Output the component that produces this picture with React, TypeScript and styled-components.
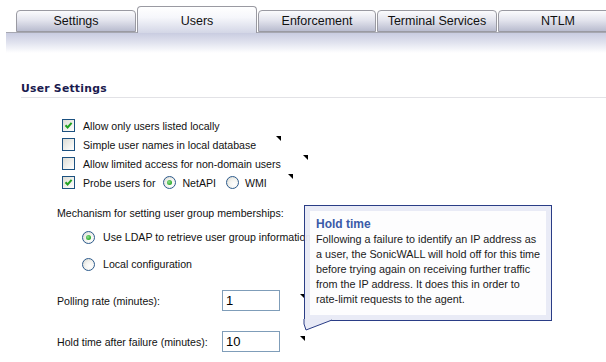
import React from "react";
import styled, { createGlobalStyle } from "styled-components";

const Global = createGlobalStyle`
  html, body { margin: 0; padding: 0; background: #ffffff; }
  body { font-family: "Liberation Sans", Arial, sans-serif; color: #111; width: 606px; height: 362px; overflow: hidden; }
`;

const Page = styled.div`
  position: relative;
  width: 606px;
  height: 362px;
`;

const TabBar = styled.div`
  display: flex;
  align-items: flex-end;
  gap: 1px;
  height: 32px;
  padding-left: 16px;
  position: relative;
  z-index: 2;
`;

const Tab = styled.div<{ $active?: boolean; $w: number }>`
  flex: 0 0 ${(p) => p.$w}px;
  box-sizing: border-box;
  height: ${(p) => (p.$active ? 27 : 22)}px;
  margin-bottom: ${(p) => (p.$active ? -1 : 0)}px;
  border: 1px solid #9a9aa2;
  border-bottom: ${(p) => (p.$active ? "none" : "1px solid #9a9aa2")};
  border-radius: 4px 4px 0 0;
  background: ${(p) =>
    p.$active
      ? "linear-gradient(#ffffff 0%, #f6f7fb 40%, #d3d6e6 100%)"
      : "linear-gradient(#fbfbfd 0%, #e4e5ee 45%, #b9bccf 100%)"};
  display: flex;
  justify-content: center;
  padding-top: ${(p) => (p.$active ? 7 : 3)}px;
  font-size: 12.5px;
  color: #111;
  white-space: nowrap;
`;

const Band = styled.div`
  margin-left: 6px;
  height: 20px;
  border-top: 1px solid #a6a7b1;
  background: linear-gradient(#c9cce0 0%, #dfe1ee 45%, #ffffff 100%);
`;

const Section = styled.div`
  padding-left: 21px;
  display: flex;
  flex-direction: column;
`;

const Heading = styled.div`
  margin-top: 29px;
  height: 14px;
  line-height: 14px;
  font-family: "DejaVu Sans", Verdana, sans-serif;
  font-weight: bold;
  font-size: 10.8px;
  letter-spacing: 0.25px;
  color: #1a1a4e;
  border-bottom: 1px solid #e2e2e6;
  padding-bottom: 1px;
`;

const Row = styled.div<{ $mt?: number; $indent: number; $h?: number }>`
  display: flex;
  align-items: center;
  margin-top: ${(p) => p.$mt ?? 0}px;
  margin-left: ${(p) => p.$indent}px;
  height: ${(p) => p.$h ?? 19}px;
  font-size: 10.6px;
  white-space: nowrap;
  position: relative;
`;

const Label = styled.span<{ $gap?: number }>`
  margin-left: ${(p) => p.$gap ?? 0}px;
`;

const FieldLabel = styled.span`
  width: 165px;
  flex: 0 0 165px;
`;

const BoxShell = styled.span`
  box-sizing: border-box;
  width: 13px;
  height: 13px;
  border: 1px solid #1c5180;
  background: linear-gradient(135deg, #dcdcd5 0%, #f2f2ee 60%, #ffffff 100%);
  display: inline-flex;
  align-items: center;
  justify-content: center;
  flex: 0 0 13px;
`;

const Check = ({ on }: { on?: boolean }) => (
  <BoxShell>
    {on && (
      <svg width="9" height="9" viewBox="0 0 9 9">
        <path d="M1.5 4.2 L3.6 6.4 L7.6 1.8" stroke="#21a121" strokeWidth="2" fill="none" />
      </svg>
    )}
  </BoxShell>
);

const RadioShell = styled.span`
  box-sizing: border-box;
  width: 13px;
  height: 13px;
  border-radius: 50%;
  border: 1px solid #2c5a8c;
  background: radial-gradient(circle at 65% 65%, #ffffff 0%, #f4f4f0 45%, #d4d4cc 100%);
  display: inline-flex;
  align-items: center;
  justify-content: center;
  flex: 0 0 13px;
`;

const Dot = styled.span`
  width: 5px;
  height: 5px;
  border-radius: 50%;
  background: radial-gradient(circle at 40% 40%, #8fe08f 0%, #29a829 70%);
`;

const Radio = ({ on }: { on?: boolean }) => <RadioShell>{on && <Dot />}</RadioShell>;

const Marker = styled.span<{ $gap: number; $top: number }>`
  align-self: flex-start;
  margin-left: ${(p) => p.$gap}px;
  margin-top: ${(p) => p.$top}px;
  width: 0;
  height: 0;
  border-top: 5px solid #000;
  border-left: 5px solid transparent;
`;

const TextBox = styled.div`
  box-sizing: border-box;
  width: 58px;
  height: 21px;
  border: 1px solid #7f9db9;
  background: #fff;
  font-size: 13px;
  line-height: 19px;
  padding-left: 3px;
  color: #000;
`;

const Ghost = styled.span`
  position: absolute;
  left: 346px;
  top: 0;
  font-size: 11px;
  color: #888;
`;

const Tip = styled.div`
  position: absolute;
  left: 304px;
  top: 205px;
  width: 248px;
  height: 116px;
  box-sizing: border-box;
  border: 1px solid #2a3d86;
  background: rgba(232, 234, 246, 0.95);
  padding: 5px;
  z-index: 5;
`;

const TipInner = styled.div`
  box-sizing: border-box;
  height: 100%;
  background: rgba(255, 255, 255, 0.9);
  padding: 6px 0 0 6px;
`;

const TipTitle = styled.div`
  font-weight: bold;
  font-size: 12px;
  line-height: 15px;
  color: #3b5aa8;
`;

const TipLine = styled.div`
  font-size: 10.8px;
  line-height: 15px;
  color: #1a1a1a;
  white-space: nowrap;
`;

const Tail = styled.svg`
  position: absolute;
  left: 303px;
  top: 319px;
  z-index: 6;
`;

const tabs: { name: string; w: number; active?: boolean }[] = [
  { name: "Settings", w: 120 },
  { name: "Users", w: 120, active: true },
  { name: "Enforcement", w: 118 },
  { name: "Terminal Services", w: 120 },
  { name: "NTLM", w: 120 },
];

export default function App() {
  return (
    <Page>
      <Global />
      <TabBar>
        {tabs.map((t) => (
          <Tab key={t.name} $w={t.w} $active={t.active}>
            {t.name}
          </Tab>
        ))}
      </TabBar>
      <Band />
      <Section>
        <Heading>User Settings</Heading>
        <Row $indent={41} $mt={18}>
          <Check on />
          <Label $gap={8}>Allow only users listed locally</Label>
        </Row>
        <Row $indent={41}>
          <Check />
          <Label $gap={8}>Simple user names in local database</Label>
          <Marker $gap={20} $top={1} />
        </Row>
        <Row $indent={41}>
          <Check />
          <Label $gap={8}>Allow limited access for non-domain users</Label>
          <Marker $gap={22} $top={1} />
        </Row>
        <Row $indent={41}>
          <Check on />
          <Label $gap={8}>Probe users for</Label>
          <Label $gap={8} />
          <Radio on />
          <Label $gap={6}>NetAPI</Label>
          <Label $gap={10} />
          <Radio />
          <Label $gap={6}>WMI</Label>
          <Marker $gap={21} $top={1} />
        </Row>
        <Row $indent={36} $mt={13} $h={16}>
          Mechanism for setting user group memberships:
        </Row>
        <Row $indent={61} $mt={6} $h={20}>
          <Radio on />
          <Label $gap={8}>Use LDAP to retrieve user group information</Label>
          <Ghost>Configure</Ghost>
        </Row>
        <Row $indent={61} $mt={7} $h={20}>
          <Radio />
          <Label $gap={8}>Local configuration</Label>
        </Row>
        <Row $indent={36} $mt={16} $h={21}>
          <FieldLabel>Polling rate (minutes):</FieldLabel>
          <TextBox>1</TextBox>
          <Marker $gap={20} $top={4} />
        </Row>
        <Row $indent={36} $mt={20} $h={21}>
          <FieldLabel>Hold time after failure (minutes):</FieldLabel>
          <TextBox>10</TextBox>
          <Marker $gap={20} $top={5} />
        </Row>
      </Section>
      <Tip>
        <TipInner>
          <TipTitle>Hold time</TipTitle>
          <TipLine>Following a failure to identify an IP address as</TipLine>
          <TipLine>a user, the SonicWALL will hold off for this time</TipLine>
          <TipLine>before trying again on receiving further traffic</TipLine>
          <TipLine>from the IP address. It does this in order to</TipLine>
          <TipLine>rate-limit requests to the agent.</TipLine>
        </TipInner>
      </Tip>
      <Tail width="32" height="13" viewBox="0 0 32 13">
        <path d="M1 0 L1 5 L3 11 L29 1 L29 0 Z" fill="#e8eaf6" />
        <path d="M1 0 L1 5 L3 11 L29 1" stroke="#2a3d86" strokeWidth="1" fill="none" />
      </Tail>
    </Page>
  );
}
